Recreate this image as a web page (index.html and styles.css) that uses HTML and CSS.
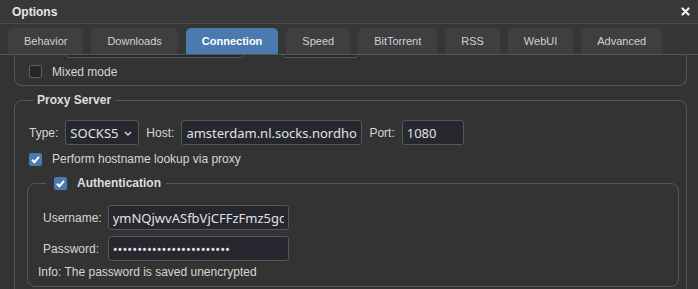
FILE: index.html
```html
<!DOCTYPE html>
<html>
<head>
<meta charset="utf-8">
<title>Options</title>
<link rel="stylesheet" href="styles.css">
</head>
<body>
<div class="window">
  <div class="titlebar">
    <span class="title">Options</span>
    <svg class="close" width="9" height="9" viewBox="0 0 9 9"><path d="M1.5 1.5L7.5 7.5M7.5 1.5L1.5 7.5" stroke="#f2f2f2" stroke-width="2.2" stroke-linecap="round"/></svg>
  </div>

  <div class="tabs">
    <div class="tab">Behavior</div>
    <div class="tab">Downloads</div>
    <div class="tab active">Connection</div>
    <div class="tab">Speed</div>
    <div class="tab">BitTorrent</div>
    <div class="tab">RSS</div>
    <div class="tab">WebUI</div>
    <div class="tab">Advanced</div>
  </div>

  <div class="panel">
    <div class="scroller">
      <!-- I2P group, scrolled mostly out of view -->
      <fieldset class="group i2p">
        <div class="row">
          <input class="field i2p-host-field" type="text" value="">
          <input class="field i2p-port-field" type="text" value="">
        </div>
        <div class="row check-row mixed">
          <span class="check"></span>
          <span>Mixed mode</span>
        </div>
      </fieldset>

      <fieldset class="group proxy">
        <legend class="legend">Proxy Server</legend>
        <div class="row">
          <label class="lbl">Type:</label>
          <div class="select-wrap">
            <select class="select">
              <option>SOCKS5</option>
            </select>
            <svg class="chevron" width="8" height="5" viewBox="0 0 8 5"><path d="M1 1L4 4L7 1" fill="none" stroke="#d8d8d8" stroke-width="1.3"/></svg>
          </div>
          <label class="lbl">Host:</label>
          <input class="field host" type="text" value="amsterdam.nl.socks.nordhold.net">
          <label class="lbl">Port:</label>
          <input class="field port" type="text" value="1080">
        </div>
        <div class="row check-row lookup">
          <span class="check on"><svg width="13" height="13" viewBox="0 0 13 13"><path d="M3 6.8L5.4 9.2L10 3.8" fill="none" stroke="#fff" stroke-width="2"/></svg></span>
          <span>Perform hostname lookup via proxy</span>
        </div>

        <fieldset class="group auth">
          <legend class="legend auth-legend">
            <span class="check on"><svg width="13" height="13" viewBox="0 0 13 13"><path d="M3 6.8L5.4 9.2L10 3.8" fill="none" stroke="#fff" stroke-width="2"/></svg></span>
            <span>Authentication</span>
          </legend>
          <div class="creds">
            <label class="lbl cred-lbl">Username:</label>
            <input class="field cred" type="text" value="ymNQjwvASfbVjCFFzFmz5gcXr">
            <label class="lbl cred-lbl">Password:</label>
            <input class="field cred" type="password" value="abcdefghijklmnopqrstuvwx">
          </div>
          <div class="info">Info: The password is saved unencrypted</div>
        </fieldset>
      </fieldset>
    </div>
  </div>
</div>
</body>
</html>
```

FILE: styles.css
```css
html, body {
    margin: 0;
    padding: 0;
    height: 100%;
    background: #333333;
}

body {
    font-family: "Liberation Sans", Arial, sans-serif;
    font-size: 12px;
    color: #d6d6d6;
    overflow: hidden;
}

.window {
    display: flex;
    flex-direction: column;
    height: 100%;
}

/* title bar */
.titlebar {
    height: 23px;
    background: #383838;
    border-bottom: 1px solid #4b4b4b;
    display: flex;
    align-items: center;
    justify-content: space-between;
    padding: 0 8px 0 12px;
    flex: none;
}
.title {
    font-weight: bold;
    color: #e6e6e6;
    line-height: 16px;
}
.close {
    display: block;
}

/* tabs */
.tabs {
    display: flex;
    gap: 8px;
    padding: 4px 8px 0 8px;
    border-bottom: 1px solid #555555;
    background: #363636;
    flex: none;
}
.tab {
    height: 26px;
    line-height: 26px;
    padding: 0 16px;
    background: #3f3f3f;
    border-radius: 5px 5px 0 0;
    font-size: 11px;
    color: #cdd2d8;
}
.tab.active {
    background: #4a7aaf;
    color: #ffffff;
    font-weight: bold;
}

/* scrolled content */
.panel {
    flex: 1;
    overflow: hidden;
}
.scroller {
    margin-top: -23px;
}

.group {
    border: 1px solid #575757;
    border-radius: 8px;
    margin: 0 11px 0 14px;
    padding: 0 7px 10px 14px;
    min-inline-size: 0;
}
.legend {
    margin-left: 4px;
    padding: 0 4px;
    font-weight: bold;
    line-height: 16px;
    color: #dedede;
}

.i2p {
    border-top-color: transparent;
    padding-bottom: 5px;
}
.i2p .i2p-host-field {
    width: 178px;
    margin-left: 37px;
}
.i2p .i2p-port-field {
    width: 75px;
    margin-left: 32px;
}

.proxy {
    margin-top: 6px;
    padding-top: 12px;
}

.row {
    display: flex;
    align-items: center;
    height: 25px;
}
.lbl {
    margin-right: 7px;
    white-space: nowrap;
}
.field, .select {
    box-sizing: border-box;
    height: 25px;
    background: #27272f;
    border: 1px solid #575757;
    border-radius: 3px;
    color: #e2e2e2;
    font-family: "Noto Sans", sans-serif;
    font-size: 13px;
    padding: 0 4px;
    margin: 0 7px 0 0;
    outline: none;
}
.host {
    width: 181px;
}
.port {
    width: 62px;
}

.select-wrap {
    position: relative;
    margin-right: 7px;
}
.select {
    -webkit-appearance: none;
    appearance: none;
    width: 74px;
    margin: 0;
}
.chevron {
    position: absolute;
    right: 7px;
    top: 11px;
}

.check-row {
    height: 20px;
    gap: 10px;
}
.mixed {
    margin-top: 5px;
    height: 17px;
}
.lookup {
    margin-top: 4px;
}

.check {
    box-sizing: border-box;
    width: 13px;
    height: 13px;
    border: 1px solid #5e5e5e;
    border-radius: 2px;
    background: #25252b;
    display: inline-block;
    flex: none;
}
.check.on {
    background: #4a7aaf;
    border: none;
}
.check svg {
    display: block;
}

/* authentication */
.auth {
    margin: 6px 0 0 -2px;
    padding: 14px 0 6px 10px;
}
.auth-legend {
    margin-left: 8px;
    padding: 0 5px 0 8px;
    display: flex;
    align-items: center;
    gap: 10px;
}

.creds {
    display: grid;
    grid-template-columns: auto 181px;
    column-gap: 6px;
    row-gap: 6px;
    justify-content: start;
    align-items: center;
}
.cred-lbl {
    padding-left: 5px;
    margin: 0;
}
.cred {
    width: 181px;
    margin: 0;
}
.info {
    margin-top: 3px;
    line-height: 16px;
}
```
